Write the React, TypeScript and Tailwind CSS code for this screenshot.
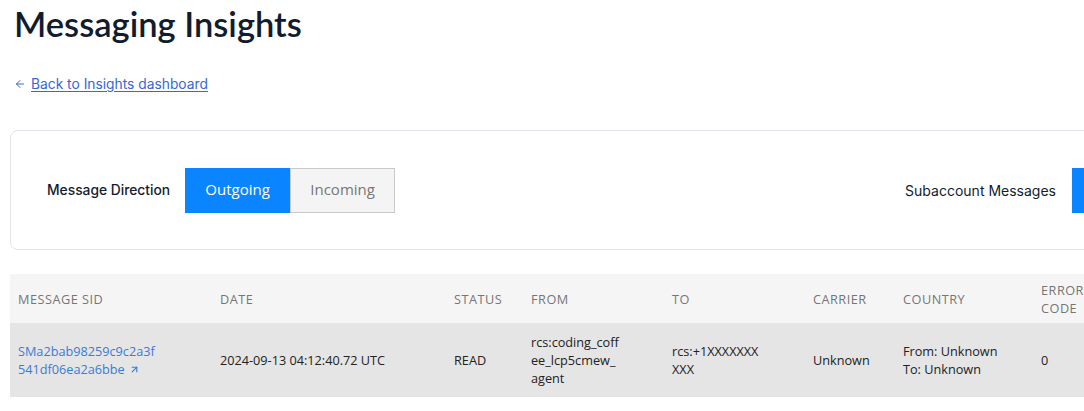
import { ArrowLeft, ArrowUpRight } from 'lucide-react'

const inter = { fontFamily: 'Inter, "Noto Sans", sans-serif' }

const columns = [
  { label: 'Message SID', w: 'w-[202px]' },
  { label: 'Date', w: 'w-[234px]' },
  { label: 'Status', w: 'w-[77px]' },
  { label: 'From', w: 'w-[141px]' },
  { label: 'To', w: 'w-[141px]' },
  { label: 'Carrier', w: 'w-[90px]' },
  { label: 'Country', w: 'w-[138px]' },
  { label: 'Error Code', w: 'w-[62px]' },
  { label: 'Price', w: 'w-[100px]' }
]

export default function App() {
  return (
    <div className="w-full overflow-hidden bg-white min-h-[411px]">
      <div className="w-[1240px] pl-[10px] pt-[2px]">
        {/* Título */}
        <h1 className="pl-[4px] text-[34.5px] leading-[44px] font-semibold text-[#121c2d] font-['Lato',sans-serif]">
          Messaging Insights
        </h1>

        {/* Voltar */}
        <a
          href="#"
          className="mt-[28px] ml-[4px] inline-flex items-center gap-[5px] text-[13.8px] leading-[20px] text-[#3867d6]"
          style={inter}
        >
          <ArrowLeft size={12} strokeWidth={2} />
          <span className="underline underline-offset-2">Back to Insights dashboard</span>
        </a>

        {/* Filtros */}
        <div className="mt-[34px] w-[1204px] h-[120px] rounded-lg border border-[#e1e3ea] flex items-center justify-between px-[36px]">
          <div className="flex items-center gap-[15px]">
            <span className="text-[13.8px] font-medium text-[#121c2d]" style={inter}>
              Message Direction
            </span>
            <div className="flex font-['Open_Sans',sans-serif] text-[15px] leading-[20px]">
              <button className="w-[105px] h-[45px] pb-[2px] bg-[#0a84ff] text-white">Outgoing</button>
              <button className="w-[105px] h-[45px] pb-[2px] bg-[#f4f4f4] text-[#777] border border-[#c9c9c9]">
                Incoming
              </button>
            </div>
          </div>
          <div className="flex items-center gap-4">
            <span className="text-[14px] text-[#121c2d]" style={inter}>
              Subaccount Messages
            </span>
            <div className="flex font-['Open_Sans',sans-serif] text-[15px]">
              <button className="w-[105px] h-[45px] bg-[#0a84ff] text-white">Yes</button>
            </div>
          </div>
        </div>

        {/* Tabela */}
        <table className="mt-[24px] table-fixed border-collapse font-['Open_Sans',sans-serif] text-[12.7px]">
          <thead>
            <tr className="bg-[#f5f5f5] h-[49px]">
              {columns.map((c) => (
                <th
                  key={c.label}
                  className={`${c.w} px-2 text-left align-middle font-normal uppercase tracking-[0.04em] text-[#767676] leading-[18px]`}
                >
                  {c.label}
                </th>
              ))}
            </tr>
          </thead>
          <tbody>
            <tr className="bg-[#e5e5e5] h-[74px] text-[#222] leading-[18px]">
              <td className="px-2 align-middle">
                <div className="w-[150px]">
                  <a href="#" className="text-[#3a7bd5]">
                    SMa2bab98259c9c2a3f<wbr />541df06ea2a6bbe
                    <ArrowUpRight size={11} strokeWidth={2.5} className="inline ml-[4px] mb-[2px]" />
                  </a>
                </div>
              </td>
              <td className="px-2 align-middle">2024-09-13 04:12:40.72 UTC</td>
              <td className="px-2 align-middle">READ</td>
              <td className="px-2 align-middle">
                <div className="w-[100px]">
                  rcs:coding_coff<wbr />ee_lcp5cmew_<wbr />agent
                </div>
              </td>
              <td className="px-2 align-middle">
                <div className="w-[100px]">
                  rcs:+1XXXXXXX<wbr />XXX
                </div>
              </td>
              <td className="px-2 align-middle">Unknown</td>
              <td className="px-2 align-middle">
                From: Unknown
                <br />
                To: Unknown
              </td>
              <td className="px-2 align-middle">0</td>
              <td className="px-2 align-middle">-</td>
            </tr>
          </tbody>
        </table>
      </div>
    </div>
  )
}
